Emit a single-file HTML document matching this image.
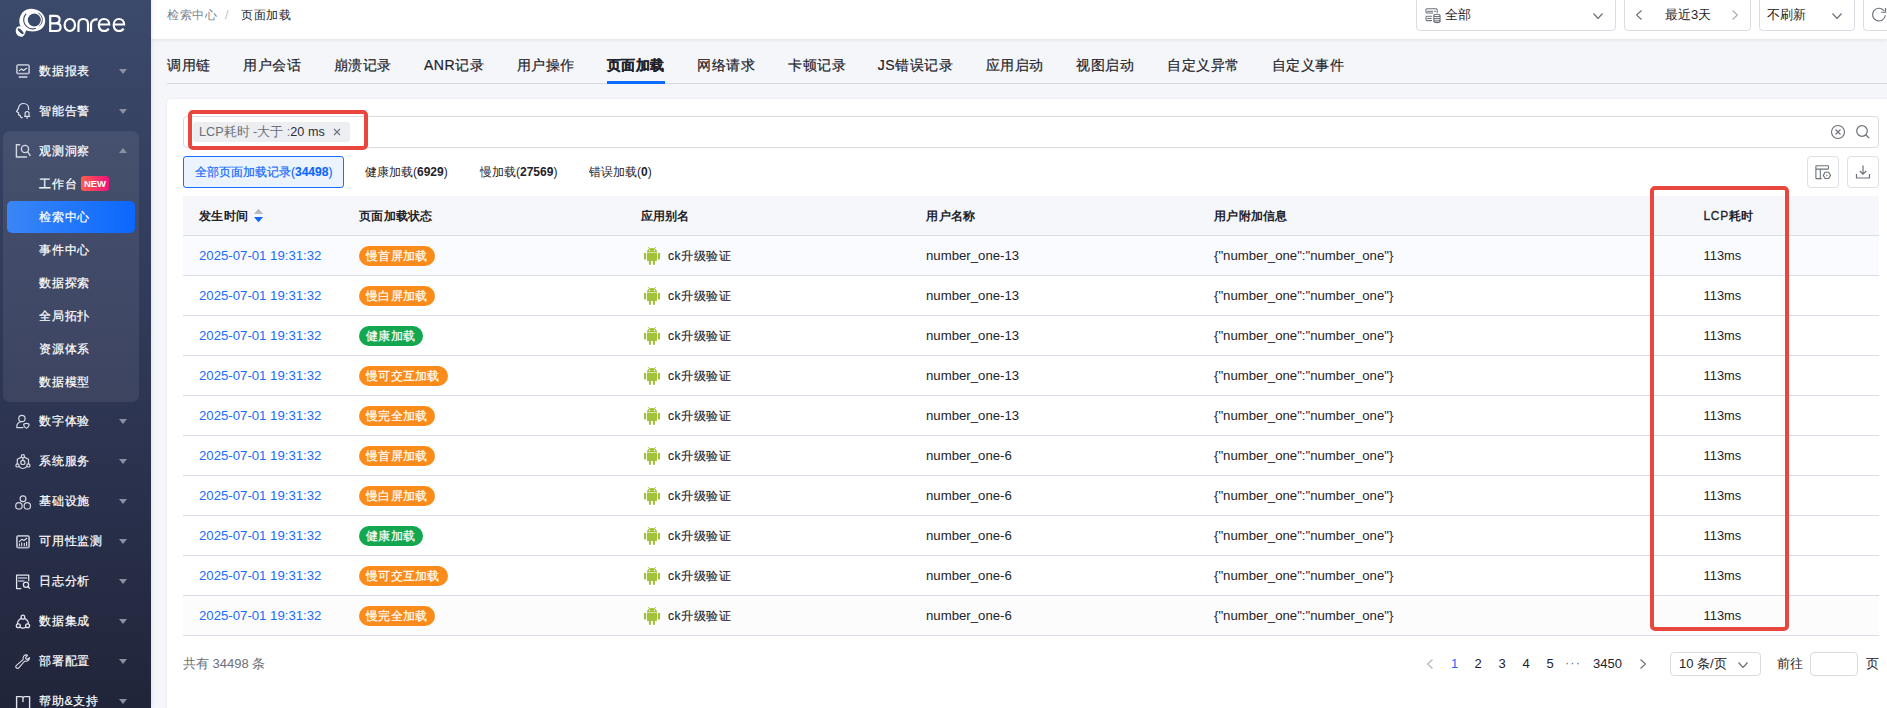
<!DOCTYPE html><html><head><meta charset="utf-8"><style>
*{box-sizing:border-box;margin:0;padding:0}
html,body{width:1887px;height:708px;overflow:hidden}
body{font-family:"Liberation Sans",sans-serif;font-size:13px;color:#1f2329;background:#f4f6fa;position:relative}
.a{position:absolute;white-space:nowrap}
#side{position:absolute;left:0;top:0;width:151px;height:708px;background:linear-gradient(#3b496a,#2f3857 50%,#21253a);box-shadow:1px 0 4px rgba(0,0,0,0.09);z-index:2}
.mt{position:absolute;left:39px;font-size:12px;letter-spacing:0.8px;-webkit-text-stroke:0.2px #fff;line-height:16px;color:#fff;white-space:nowrap}
.ic{position:absolute;left:15px;width:16px;height:16px}
.ar{position:absolute;left:119px;width:0;height:0;border-left:4px solid transparent;border-right:4px solid transparent;border-top:5px solid #8b90a2}
.arup{position:absolute;left:119px;width:0;height:0;border-left:4px solid transparent;border-right:4px solid transparent;border-bottom:5px solid #8b90a2}
#hdr{position:absolute;left:151px;top:0;width:1736px;height:39px;background:#fff;box-shadow:0 1px 4px rgba(0,0,0,0.09)}
.box{position:absolute;border:1px solid #d8dce3;border-radius:4px;background:#fff}
.tab{position:absolute;top:56px;font-size:14px;letter-spacing:0.5px;-webkit-text-stroke-width:0.2px;line-height:18px;color:#1f2329;white-space:nowrap}
.th{position:absolute;top:208px;font-weight:bold;font-size:12px;letter-spacing:0.25px;line-height:16px;color:#1f2329;white-space:nowrap}
.td{position:absolute;font-size:13.2px;line-height:16px;color:#1f2329;white-space:nowrap}
.badge{position:absolute;height:20px;line-height:20px;border-radius:10px;color:#fff;font-size:12px;letter-spacing:0.25px;padding:0 8px 0 7px;-webkit-text-stroke:0.2px #fff;white-space:nowrap}
</style></head><body>
<div id="side">
<svg class="a" style="left:0;top:0" width="130" height="45" viewBox="0 0 130 45">
<path fill="#fff" d="M31 8.7 C38.5 8.7 45.2 13.8 45.2 20.8 C45.2 26 41.5 30.5 35.5 31.3 C31.5 31.8 27 31 24 29.5 C21 28 19.3 25 19.3 21.5 C19.3 14 24.5 8.7 31 8.7 Z"/>
<path fill="#fff" d="M20.5 26.5 L26.5 29.2 L25 33.5 L19.5 32 Z"/>
<circle cx="34.3" cy="20" r="6.5" fill="#3b496a"/>
<path d="M26.2 13.6 A9 9 0 0 0 35.8 28.3" fill="none" stroke="#3b496a" stroke-width="1.1"/>
<path d="M38.3 13 A7.7 7.7 0 0 1 39.2 26" fill="none" stroke="#3b496a" stroke-width="0.9"/>
<ellipse cx="20.4" cy="31.5" rx="4.5" ry="5.4" fill="#fff" transform="rotate(-25 20.4 31.5)"/>
<ellipse cx="20.65" cy="31.2" rx="3.9" ry="1.35" fill="#3b496a" transform="rotate(45 20.65 31.2)"/>
<g fill="none" stroke="#fff" stroke-width="2.2">
<path d="M50.2 15.8 V31 M49.1 15.8 H55.3 C58.1 15.8 59.6 17.6 59.6 19.6 C59.6 21.7 58.1 23.4 55.3 23.4 H50.2 M55.3 23.4 H56.3 C59.2 23.4 60.6 25.3 60.6 27.2 C60.6 29.3 59.2 31 56.3 31 H49.1"/>
<ellipse cx="69.8" cy="25" rx="5.2" ry="6"/>
<path d="M78.45 32.1 V24.2 C78.45 20.6 80.6 19 83.25 19 C85.9 19 88 20.6 88 24.2 V32.1"/>
<path d="M91.05 32.1 V24.5 C91.05 21 93.5 19.1 97.6 19.3"/>
<path d="M98.8 24.5 H109.2 C109.2 21.1 107 19 104 19 C100.9 19 98.8 21.6 98.8 25.1 C98.8 28.7 101 31 104 31 C106.2 31 107.7 30.1 108.7 28.6"/>
<path d="M113.7 24.5 H124.1 C124.1 21.1 121.9 19 118.9 19 C115.8 19 113.7 21.6 113.7 25.1 C113.7 28.7 115.9 31 118.9 31 C121.1 31 122.6 30.1 123.6 28.6"/>
</g>
</svg>
<div class="a" style="left:3px;top:131px;width:136px;height:271px;border-radius:7px;background:rgba(255,255,255,0.075)"></div>
<div class="a" style="left:7px;top:201px;width:128px;height:32px;border-radius:5px;background:linear-gradient(90deg,#3a86f6,#0b68fe)"></div>
<svg class="a" style="left:0;top:0" width="151" height="708" viewBox="0 0 151 708" fill="none" stroke-linecap="round" stroke-linejoin="round">
<g stroke="#b3b8c8" stroke-width="1.8"><rect x="16.9" y="64.9" width="12.2" height="8.8" rx="1.6"/></g>
<rect x="18.7" y="76" width="8.7" height="1.9" rx="0.5" fill="#b3b8c8"/>
<path d="M19.4 70.6 L21.5 68.9 L23.5 70.4 L26.6 68.3" stroke="#e3e6ee" stroke-width="1.2"/>
<g stroke="#dfe2ea" stroke-width="1.2">
<path d="M22.2 117.6 H21 L20.3 115.6 L18.7 114.9 L18.5 112.7 L16.6 111.4 L18.4 108.6 C18.7 105.2 20.9 103.5 23.6 103.5 C26.5 103.5 28.6 105.6 28.6 108.4 V109.6"/>
<path d="M24.5 116.3 H29.7 M25.1 116.2 V113.6 C25.1 112.1 25.9 111.5 27.1 111.5 C28.3 111.5 29.1 112.1 29.1 113.6 V116.2 M27.1 117.3 V118.3"/>
</g>
<g stroke="#d5d8e2" stroke-width="1.4">
<path d="M19.7 144.7 H16.4 V157 H26.6"/>
<circle cx="25" cy="149" r="3.6"/>
<path d="M27.7 151.8 L30.1 155.4"/>
</g>
<g stroke="#d5d8e2" stroke-width="1.2">
<circle cx="21.9" cy="418.5" r="3.2"/>
<path d="M21.2 421.7 C18.6 422.3 16.8 423.9 16.8 426.4 V427.6 H23"/>
<path d="M23.7 424.7 C23.7 423.8 24.6 423.4 26.4 423.4 C28.2 423.4 29.1 423.8 29.1 424.7 C29.1 426.2 27.8 427.5 26.4 428.2 C25 427.5 23.7 426.2 23.7 424.7 Z"/>
</g>
<g stroke="#d5d8e2" stroke-width="1.2">
<circle cx="22.9" cy="456.3" r="1.6"/><circle cx="17.5" cy="465.4" r="1.6"/><circle cx="28.4" cy="465.4" r="1.6"/>
<circle cx="22.9" cy="462.4" r="2.1"/>
<path d="M21.5 457.1 L17.3 459.3 V463.8 M24.3 457.1 L28.5 459.3 V463.8 M18.9 466.4 C20.5 468 21.6 468.5 22.9 468.5 C24.2 468.5 25.4 468 27 466.4 M22.9 457.9 V460.3"/>
</g>
<g stroke="#d5d8e2" stroke-width="1.2">
<circle cx="23" cy="498.7" r="2.9"/><circle cx="18.9" cy="505.9" r="3.2"/><circle cx="27.3" cy="505.9" r="3.2"/>
</g>
<g stroke="#b3b8c8" stroke-width="1.8"><rect x="16.9" y="535.9" width="12.2" height="11.8" rx="1.6"/></g>
<path d="M19.3 541.6 L21.8 539.3 L23.9 540.5 L26.8 538.3" stroke="#e3e6ee" stroke-width="1.1"/>
<path d="M19.4 543.8 V545.6 M21.7 542.8 V545.6 M24.3 543.3 V545.6 M26.6 542 V545.6" stroke="#e3e6ee" stroke-width="1.1"/>
<g stroke="#e3e6ee" stroke-width="1.3">
<path d="M20.8 588.6 H16.6 V575.1 H28.7 V580.7"/>
<circle cx="26" cy="584.8" r="2.6"/>
<path d="M27.9 586.7 L29.6 588.4"/>
</g>
<path d="M18.6 578 H26.6 M18.6 581 H23.8" stroke="#b3b8c8" stroke-width="1.6"/>
<g stroke="#dfe2ea" stroke-width="1.3">
<ellipse cx="22.9" cy="617.2" rx="1.8" ry="2"/><ellipse cx="18.3" cy="625.8" rx="2" ry="1.9"/><ellipse cx="27.6" cy="625.8" rx="2" ry="1.9"/>
<path d="M21.3 618.3 C18.9 619.7 17.3 621.8 17.5 623.9 M24.5 618.3 C26.9 619.7 28.5 621.8 28.3 623.9 M20 627.1 C21 627.9 21.9 628.2 22.9 628.2 C23.9 628.2 24.9 627.9 25.9 627.1"/>
</g>
<path d="M26.8 654.9 C24.6 654.7 22.8 656.6 23.1 658.8 C23.2 659.3 23.1 659.6 22.8 659.9 L16.4 665.4 C15.6 666.1 15.6 667.2 16.3 667.9 C17 668.6 18.1 668.6 18.8 667.8 L24.3 661.5 C24.6 661.2 24.9 661.1 25.4 661.2 C27.6 661.6 29.6 659.9 29.5 657.6 L27.6 659.2 C27.3 659.4 26.9 659.4 26.6 659.2 L25.8 658.5 C25.5 658.2 25.5 657.7 25.8 657.4 L27.3 655.7 C27.5 655.4 27.3 655 26.8 654.9 Z" stroke="#dfe2ea" stroke-width="1.1"/>
<path d="M16.6 709 V696.6 H21.3 C22.4 696.6 23 697.3 23 698.3 V701.5 M29.6 709 V696.6 H24.8 C23.7 696.6 23 697.3 23 698.3" stroke="#dfe2ea" stroke-width="1.4"/>
</svg>
<div class="mt" style="top:63px">数据报表</div>
<div class="ar" style="top:69px"></div>
<div class="mt" style="top:103px">智能告警</div>
<div class="ar" style="top:109px"></div>
<div class="mt" style="top:143px">观测洞察</div>
<div class="arup" style="top:148px"></div>
<div class="mt" style="top:413px">数字体验</div>
<div class="ar" style="top:419px"></div>
<div class="mt" style="top:453px">系统服务</div>
<div class="ar" style="top:459px"></div>
<div class="mt" style="top:493px">基础设施</div>
<div class="ar" style="top:499px"></div>
<div class="mt" style="top:533px">可用性监测</div>
<div class="ar" style="top:539px"></div>
<div class="mt" style="top:573px">日志分析</div>
<div class="ar" style="top:579px"></div>
<div class="mt" style="top:613px">数据集成</div>
<div class="ar" style="top:619px"></div>
<div class="mt" style="top:653px">部署配置</div>
<div class="ar" style="top:659px"></div>
<div class="mt" style="top:693px">帮助&支持</div>
<div class="ar" style="top:699px"></div>
<div class="mt" style="top:176px">工作台</div>
<div class="mt" style="top:209px">检索中心</div>
<div class="mt" style="top:242px">事件中心</div>
<div class="mt" style="top:275px">数据探索</div>
<div class="mt" style="top:308px">全局拓扑</div>
<div class="mt" style="top:341px">资源体系</div>
<div class="mt" style="top:374px">数据模型</div>
<div class="a" style="left:81px;top:176px;width:28px;height:15px;border-radius:3px;background:linear-gradient(90deg,#ff5e4a,#f0137d);font-size:9.5px;font-weight:bold;color:#fff;line-height:15px;text-align:center">NEW</div>
</div>
<div id="hdr"></div>
<div class="a" style="left:167px;top:7px;font-size:12px;letter-spacing:0.6px;line-height:16px;color:#80858f">检索中心</div>
<div class="a" style="left:225px;top:7px;font-size:13px;line-height:16px;color:#c0c4cc">/</div>
<div class="a" style="left:241px;top:7px;font-size:12px;letter-spacing:0.6px;line-height:16px;color:#1f2329">页面加载</div>
<div class="box" style="left:1416px;top:-3px;width:200px;height:34px"></div>
<svg class="a" style="left:1420px;top:3px" width="26" height="24" viewBox="0 0 26 24" fill="none" stroke="#6b7079" stroke-width="1.05" stroke-linecap="round">
<path d="M12.8 9.9 H7 C6.4 9.9 6 9.5 6 8.9 V6.7 C6 6.1 6.4 5.7 7 5.7 H16.2 C16.8 5.7 17.2 6.1 17.2 6.7 V9.5"/>
<path d="M7.6 8.2 H12.6 M14.4 8.2 H15.5"/>
<path d="M11.6 13.2 H7 C6.4 13.2 6 13.6 6 14.2 V16.6 C6 17.2 6.4 17.6 7 17.6 H11.6 M7.6 15.4 H11.2"/>
<path d="M13.8 12.4 C13.8 11.6 15.2 11.2 16.95 11.2 C18.7 11.2 20.1 11.6 20.1 12.4 V18.4 C20.1 19.2 18.7 19.6 16.95 19.6 C15.2 19.6 13.8 19.2 13.8 18.4 Z M13.8 12.4 C13.8 13.2 15.2 13.6 16.95 13.6 C18.7 13.6 20.1 13.2 20.1 12.4 M13.8 14.8 C13.8 15.5 15.2 15.8 16.95 15.8 C18.7 15.8 20.1 15.5 20.1 14.8 M13.8 17 C13.8 17.7 15.2 18 16.95 18 C18.7 18 20.1 17.7 20.1 17"/>
</svg>
<div class="a" style="left:1445px;top:7px;font-size:13px;line-height:16px;color:#1f2329">全部</div>
<svg class="a" style="left:1593px;top:13px" width="10" height="6" viewBox="0 0 10 6"><path d="M0.5 0.5 L5.0 5.5 L9.5 0.5" fill="none" stroke="#6b7079" stroke-width="1.2"/></svg>
<div class="box" style="left:1624px;top:-3px;width:127px;height:34px"></div>
<svg class="a" style="left:1636px;top:10px" width="6" height="10" viewBox="0 0 6 10"><path d="M5.5 0.5 L0.5 5.0 L5.5 9.5" fill="none" stroke="#6b7079" stroke-width="1.2"/></svg>
<div class="a" style="left:1665px;top:7px;font-size:13px;line-height:16px;color:#1f2329">最近3天</div>
<svg class="a" style="left:1732px;top:10px" width="6" height="10" viewBox="0 0 6 10"><path d="M0.5 0.5 L5.5 5.0 L0.5 9.5" fill="none" stroke="#a9adb5" stroke-width="1.2"/></svg>
<div class="box" style="left:1759px;top:-3px;width:96px;height:34px"></div>
<div class="a" style="left:1767px;top:7px;font-size:13px;line-height:16px;color:#1f2329">不刷新</div>
<svg class="a" style="left:1832px;top:13px" width="10" height="6" viewBox="0 0 10 6"><path d="M0.5 0.5 L5.0 5.5 L9.5 0.5" fill="none" stroke="#6b7079" stroke-width="1.2"/></svg>
<div class="box" style="left:1863px;top:-3px;width:40px;height:34px"></div>
<svg class="a" style="left:1870px;top:6px" width="17" height="18" viewBox="0 0 17 18"><path d="M15.3 9.2 A6.4 6.4 0 1 1 14.2 5" fill="none" stroke="#6b7079" stroke-width="1.1"/><path d="M15.6 2.1 V6.2 H11.2" fill="none" stroke="#6b7079" stroke-width="1.1"/></svg>
<div class="a" style="left:167px;top:83px;width:1720px;height:1px;background:#d5dae2"></div>
<div class="tab" style="left:167px;">调用链</div>
<div class="tab" style="left:243px;">用户会话</div>
<div class="tab" style="left:333.6px;">崩溃记录</div>
<div class="tab" style="left:424px;">ANR记录</div>
<div class="tab" style="left:516.7px;">用户操作</div>
<div class="tab" style="left:606.8px;font-weight:bold;">页面加载</div>
<div class="tab" style="left:697.4px;">网络请求</div>
<div class="tab" style="left:788px;">卡顿记录</div>
<div class="tab" style="left:877.7px;">JS错误记录</div>
<div class="tab" style="left:985.9px;">应用启动</div>
<div class="tab" style="left:1076.4px;">视图启动</div>
<div class="tab" style="left:1167.3px;">自定义异常</div>
<div class="tab" style="left:1271.5px;">自定义事件</div>
<div class="a" style="left:607px;top:81px;width:58px;height:3px;background:#0b6bff"></div>
<div class="a" style="left:167px;top:99px;width:1740px;height:640px;background:#fff;border-radius:4px;box-shadow:0 0 3px rgba(0,0,0,0.08)"></div>
<div class="box" style="left:183px;top:116px;width:1696px;height:32px;border-color:#d9dce3"></div>
<div class="a" style="left:193px;top:122px;width:157px;height:20px;border-radius:3px;background:#eceef2"></div>
<div class="a" style="left:199px;top:124px;font-size:12.65px;line-height:16px;color:#6b7079">LCP耗时 -大于 :<span style="color:#2b2f36">20 ms</span></div>
<svg class="a" style="left:333px;top:128px" width="8" height="8" viewBox="0 0 8 8"><path d="M1 1 L7 7 M7 1 L1 7" stroke="#6b7079" stroke-width="1.1"/></svg>
<svg class="a" style="left:1830px;top:124px" width="16" height="16" viewBox="0 0 16 16"><circle cx="8" cy="8" r="6.5" fill="none" stroke="#6b7079" stroke-width="1.1"/><path d="M5.5 5.5 L10.5 10.5 M10.5 5.5 L5.5 10.5" stroke="#6b7079" stroke-width="1.1"/></svg>
<svg class="a" style="left:1855px;top:124px" width="16" height="16" viewBox="0 0 16 16"><circle cx="7" cy="7" r="5.3" fill="none" stroke="#6b7079" stroke-width="1.2"/><path d="M11 11 L14 14" stroke="#6b7079" stroke-width="1.3"/></svg>
<div class="a" style="left:188px;top:110px;width:180px;height:40px;border:4px solid #e9473d;border-radius:5px"></div>
<div class="a" style="left:183px;top:156px;width:161px;height:32px;border:1px solid #1a6efc;border-radius:3px;background:#ebf3fe"></div>
<div class="a" style="left:195px;top:164px;font-size:12px;line-height:16px;color:#0f66fb;-webkit-text-stroke-width:0.15px">全部页面加载记录(<b>34498</b>)</div>
<div class="a" style="left:365px;top:164px;font-size:12px;line-height:16px;color:#1f2329">健康加载(<b>6929</b>)</div>
<div class="a" style="left:480px;top:164px;font-size:12px;line-height:16px;color:#1f2329">慢加载(<b>27569</b>)</div>
<div class="a" style="left:589px;top:164px;font-size:12px;line-height:16px;color:#1f2329">错误加载(<b>0</b>)</div>
<div class="box" style="left:1807px;top:156px;width:32px;height:32px;border-color:#dcdfe5"></div>
<svg class="a" style="left:1805px;top:154px" width="36" height="36" viewBox="0 0 36 36" fill="none" stroke="#6b7079" stroke-width="1.1" stroke-linejoin="round"><rect x="10.9" y="11.7" width="12.6" height="3.4" rx="0.6"/><path d="M10.9 15.1 V23.9 C10.9 24.3 11.2 24.6 11.6 24.6 H16.6 M15.3 15.2 V24.4"/><path d="M18.3 21.4 L20.1 18.3 H23.7 L25.5 21.4 L23.7 24.5 H20.1 Z"/><path d="M21.3 20.4 L22.9 21.4 L21.3 22.4 Z" fill="#6b7079" stroke="none"/></svg>
<div class="box" style="left:1847px;top:156px;width:32px;height:32px;border-color:#dcdfe5"></div>
<svg class="a" style="left:1855px;top:164px" width="16" height="16" viewBox="0 0 16 16"><path d="M8 1.5 V10 M4.8 7 L8 10.2 L11.2 7" fill="none" stroke="#6b7079" stroke-width="1.2"/><path d="M1.5 10 V14 H14.5 V10" fill="none" stroke="#6b7079" stroke-width="1.2"/></svg>
<div class="a" style="left:183px;top:196px;width:1696px;height:40px;background:#f5f7fa;border-bottom:1px solid #d9dee6"></div>
<div class="th" style="left:199px">发生时间</div>
<div class="th" style="left:359px">页面加载状态</div>
<div class="th" style="left:640.6px">应用别名</div>
<div class="th" style="left:926.4px">用户名称</div>
<div class="th" style="left:1214.2px">用户附加信息</div>
<div class="th" style="left:1703.6px"><span style="font-weight:normal;-webkit-text-stroke-width:0.3px;letter-spacing:0.6px">LCP</span>耗时</div>
<svg class="a" style="left:254px;top:208px" width="9" height="15" viewBox="0 0 9 15"><path d="M0 6 L4.5 0.8 L9 6 Z" fill="#b4bac4"/><path d="M0 9 L4.5 14.2 L9 9 Z" fill="#0f66fb"/></svg>
<div class="a" style="left:183px;top:236px;width:1696px;height:40px;background:#fafbfe;border-bottom:1px solid #d9dee6"></div>
<div class="td" style="left:199px;top:248px;color:#1a6cfb">2025-07-01 19:31:32</div>
<div class="badge" style="left:359px;top:246px;background:#fb8b1a">慢首屏加载</div>
<svg class="a" style="left:643px;top:246px" width="18" height="20" viewBox="0 0 18 20"><path d="M5.2 1.1 L6.6 2.6 M12.8 1.1 L11.4 2.6" stroke="#a3c13a" stroke-width="0.9"/><path d="M3.9 6.2 C3.9 3.5 6 1.9 9 1.9 C12 1.9 14.1 3.5 14.1 6.2 Z" fill="#a3c13a"/><path d="M3.9 6.8 H14.1 V14 C14.1 14.5 13.7 14.9 13.2 14.9 H4.8 C4.3 14.9 3.9 14.5 3.9 14 Z" fill="#a3c13a"/><rect x="0.9" y="6.7" width="2.2" height="7" rx="1.1" fill="#a3c13a"/><rect x="14.9" y="6.7" width="2.2" height="7" rx="1.1" fill="#a3c13a"/><rect x="5.9" y="13" width="2.1" height="6" rx="1" fill="#a3c13a"/><rect x="9.9" y="13" width="2.1" height="6" rx="1" fill="#a3c13a"/><circle cx="6.6" cy="4.4" r="0.65" fill="#fff"/><circle cx="11.4" cy="4.4" r="0.65" fill="#fff"/></svg>
<div class="td" style="left:668px;top:248px;font-size:12px;letter-spacing:0.5px;-webkit-text-stroke-width:0.15px">ck升级验证</div>
<div class="td" style="left:926px;top:248px">number_one-13</div>
<div class="td" style="left:1214px;top:248px">{"number_one":"number_one"}</div>
<div class="td" style="left:1703.5px;top:248px;font-size:12.9px">113ms</div>
<div class="a" style="left:183px;top:276px;width:1696px;height:40px;background:#fff;border-bottom:1px solid #d9dee6"></div>
<div class="td" style="left:199px;top:288px;color:#1a6cfb">2025-07-01 19:31:32</div>
<div class="badge" style="left:359px;top:286px;background:#fb8b1a">慢白屏加载</div>
<svg class="a" style="left:643px;top:286px" width="18" height="20" viewBox="0 0 18 20"><path d="M5.2 1.1 L6.6 2.6 M12.8 1.1 L11.4 2.6" stroke="#a3c13a" stroke-width="0.9"/><path d="M3.9 6.2 C3.9 3.5 6 1.9 9 1.9 C12 1.9 14.1 3.5 14.1 6.2 Z" fill="#a3c13a"/><path d="M3.9 6.8 H14.1 V14 C14.1 14.5 13.7 14.9 13.2 14.9 H4.8 C4.3 14.9 3.9 14.5 3.9 14 Z" fill="#a3c13a"/><rect x="0.9" y="6.7" width="2.2" height="7" rx="1.1" fill="#a3c13a"/><rect x="14.9" y="6.7" width="2.2" height="7" rx="1.1" fill="#a3c13a"/><rect x="5.9" y="13" width="2.1" height="6" rx="1" fill="#a3c13a"/><rect x="9.9" y="13" width="2.1" height="6" rx="1" fill="#a3c13a"/><circle cx="6.6" cy="4.4" r="0.65" fill="#fff"/><circle cx="11.4" cy="4.4" r="0.65" fill="#fff"/></svg>
<div class="td" style="left:668px;top:288px;font-size:12px;letter-spacing:0.5px;-webkit-text-stroke-width:0.15px">ck升级验证</div>
<div class="td" style="left:926px;top:288px">number_one-13</div>
<div class="td" style="left:1214px;top:288px">{"number_one":"number_one"}</div>
<div class="td" style="left:1703.5px;top:288px;font-size:12.9px">113ms</div>
<div class="a" style="left:183px;top:316px;width:1696px;height:40px;background:#fff;border-bottom:1px solid #d9dee6"></div>
<div class="td" style="left:199px;top:328px;color:#1a6cfb">2025-07-01 19:31:32</div>
<div class="badge" style="left:359px;top:326px;background:#14a751">健康加载</div>
<svg class="a" style="left:643px;top:326px" width="18" height="20" viewBox="0 0 18 20"><path d="M5.2 1.1 L6.6 2.6 M12.8 1.1 L11.4 2.6" stroke="#a3c13a" stroke-width="0.9"/><path d="M3.9 6.2 C3.9 3.5 6 1.9 9 1.9 C12 1.9 14.1 3.5 14.1 6.2 Z" fill="#a3c13a"/><path d="M3.9 6.8 H14.1 V14 C14.1 14.5 13.7 14.9 13.2 14.9 H4.8 C4.3 14.9 3.9 14.5 3.9 14 Z" fill="#a3c13a"/><rect x="0.9" y="6.7" width="2.2" height="7" rx="1.1" fill="#a3c13a"/><rect x="14.9" y="6.7" width="2.2" height="7" rx="1.1" fill="#a3c13a"/><rect x="5.9" y="13" width="2.1" height="6" rx="1" fill="#a3c13a"/><rect x="9.9" y="13" width="2.1" height="6" rx="1" fill="#a3c13a"/><circle cx="6.6" cy="4.4" r="0.65" fill="#fff"/><circle cx="11.4" cy="4.4" r="0.65" fill="#fff"/></svg>
<div class="td" style="left:668px;top:328px;font-size:12px;letter-spacing:0.5px;-webkit-text-stroke-width:0.15px">ck升级验证</div>
<div class="td" style="left:926px;top:328px">number_one-13</div>
<div class="td" style="left:1214px;top:328px">{"number_one":"number_one"}</div>
<div class="td" style="left:1703.5px;top:328px;font-size:12.9px">113ms</div>
<div class="a" style="left:183px;top:356px;width:1696px;height:40px;background:#fff;border-bottom:1px solid #d9dee6"></div>
<div class="td" style="left:199px;top:368px;color:#1a6cfb">2025-07-01 19:31:32</div>
<div class="badge" style="left:359px;top:366px;background:#fb8b1a">慢可交互加载</div>
<svg class="a" style="left:643px;top:366px" width="18" height="20" viewBox="0 0 18 20"><path d="M5.2 1.1 L6.6 2.6 M12.8 1.1 L11.4 2.6" stroke="#a3c13a" stroke-width="0.9"/><path d="M3.9 6.2 C3.9 3.5 6 1.9 9 1.9 C12 1.9 14.1 3.5 14.1 6.2 Z" fill="#a3c13a"/><path d="M3.9 6.8 H14.1 V14 C14.1 14.5 13.7 14.9 13.2 14.9 H4.8 C4.3 14.9 3.9 14.5 3.9 14 Z" fill="#a3c13a"/><rect x="0.9" y="6.7" width="2.2" height="7" rx="1.1" fill="#a3c13a"/><rect x="14.9" y="6.7" width="2.2" height="7" rx="1.1" fill="#a3c13a"/><rect x="5.9" y="13" width="2.1" height="6" rx="1" fill="#a3c13a"/><rect x="9.9" y="13" width="2.1" height="6" rx="1" fill="#a3c13a"/><circle cx="6.6" cy="4.4" r="0.65" fill="#fff"/><circle cx="11.4" cy="4.4" r="0.65" fill="#fff"/></svg>
<div class="td" style="left:668px;top:368px;font-size:12px;letter-spacing:0.5px;-webkit-text-stroke-width:0.15px">ck升级验证</div>
<div class="td" style="left:926px;top:368px">number_one-13</div>
<div class="td" style="left:1214px;top:368px">{"number_one":"number_one"}</div>
<div class="td" style="left:1703.5px;top:368px;font-size:12.9px">113ms</div>
<div class="a" style="left:183px;top:396px;width:1696px;height:40px;background:#fff;border-bottom:1px solid #d9dee6"></div>
<div class="td" style="left:199px;top:408px;color:#1a6cfb">2025-07-01 19:31:32</div>
<div class="badge" style="left:359px;top:406px;background:#fb8b1a">慢完全加载</div>
<svg class="a" style="left:643px;top:406px" width="18" height="20" viewBox="0 0 18 20"><path d="M5.2 1.1 L6.6 2.6 M12.8 1.1 L11.4 2.6" stroke="#a3c13a" stroke-width="0.9"/><path d="M3.9 6.2 C3.9 3.5 6 1.9 9 1.9 C12 1.9 14.1 3.5 14.1 6.2 Z" fill="#a3c13a"/><path d="M3.9 6.8 H14.1 V14 C14.1 14.5 13.7 14.9 13.2 14.9 H4.8 C4.3 14.9 3.9 14.5 3.9 14 Z" fill="#a3c13a"/><rect x="0.9" y="6.7" width="2.2" height="7" rx="1.1" fill="#a3c13a"/><rect x="14.9" y="6.7" width="2.2" height="7" rx="1.1" fill="#a3c13a"/><rect x="5.9" y="13" width="2.1" height="6" rx="1" fill="#a3c13a"/><rect x="9.9" y="13" width="2.1" height="6" rx="1" fill="#a3c13a"/><circle cx="6.6" cy="4.4" r="0.65" fill="#fff"/><circle cx="11.4" cy="4.4" r="0.65" fill="#fff"/></svg>
<div class="td" style="left:668px;top:408px;font-size:12px;letter-spacing:0.5px;-webkit-text-stroke-width:0.15px">ck升级验证</div>
<div class="td" style="left:926px;top:408px">number_one-13</div>
<div class="td" style="left:1214px;top:408px">{"number_one":"number_one"}</div>
<div class="td" style="left:1703.5px;top:408px;font-size:12.9px">113ms</div>
<div class="a" style="left:183px;top:436px;width:1696px;height:40px;background:#fff;border-bottom:1px solid #d9dee6"></div>
<div class="td" style="left:199px;top:448px;color:#1a6cfb">2025-07-01 19:31:32</div>
<div class="badge" style="left:359px;top:446px;background:#fb8b1a">慢首屏加载</div>
<svg class="a" style="left:643px;top:446px" width="18" height="20" viewBox="0 0 18 20"><path d="M5.2 1.1 L6.6 2.6 M12.8 1.1 L11.4 2.6" stroke="#a3c13a" stroke-width="0.9"/><path d="M3.9 6.2 C3.9 3.5 6 1.9 9 1.9 C12 1.9 14.1 3.5 14.1 6.2 Z" fill="#a3c13a"/><path d="M3.9 6.8 H14.1 V14 C14.1 14.5 13.7 14.9 13.2 14.9 H4.8 C4.3 14.9 3.9 14.5 3.9 14 Z" fill="#a3c13a"/><rect x="0.9" y="6.7" width="2.2" height="7" rx="1.1" fill="#a3c13a"/><rect x="14.9" y="6.7" width="2.2" height="7" rx="1.1" fill="#a3c13a"/><rect x="5.9" y="13" width="2.1" height="6" rx="1" fill="#a3c13a"/><rect x="9.9" y="13" width="2.1" height="6" rx="1" fill="#a3c13a"/><circle cx="6.6" cy="4.4" r="0.65" fill="#fff"/><circle cx="11.4" cy="4.4" r="0.65" fill="#fff"/></svg>
<div class="td" style="left:668px;top:448px;font-size:12px;letter-spacing:0.5px;-webkit-text-stroke-width:0.15px">ck升级验证</div>
<div class="td" style="left:926px;top:448px">number_one-6</div>
<div class="td" style="left:1214px;top:448px">{"number_one":"number_one"}</div>
<div class="td" style="left:1703.5px;top:448px;font-size:12.9px">113ms</div>
<div class="a" style="left:183px;top:476px;width:1696px;height:40px;background:#fff;border-bottom:1px solid #d9dee6"></div>
<div class="td" style="left:199px;top:488px;color:#1a6cfb">2025-07-01 19:31:32</div>
<div class="badge" style="left:359px;top:486px;background:#fb8b1a">慢白屏加载</div>
<svg class="a" style="left:643px;top:486px" width="18" height="20" viewBox="0 0 18 20"><path d="M5.2 1.1 L6.6 2.6 M12.8 1.1 L11.4 2.6" stroke="#a3c13a" stroke-width="0.9"/><path d="M3.9 6.2 C3.9 3.5 6 1.9 9 1.9 C12 1.9 14.1 3.5 14.1 6.2 Z" fill="#a3c13a"/><path d="M3.9 6.8 H14.1 V14 C14.1 14.5 13.7 14.9 13.2 14.9 H4.8 C4.3 14.9 3.9 14.5 3.9 14 Z" fill="#a3c13a"/><rect x="0.9" y="6.7" width="2.2" height="7" rx="1.1" fill="#a3c13a"/><rect x="14.9" y="6.7" width="2.2" height="7" rx="1.1" fill="#a3c13a"/><rect x="5.9" y="13" width="2.1" height="6" rx="1" fill="#a3c13a"/><rect x="9.9" y="13" width="2.1" height="6" rx="1" fill="#a3c13a"/><circle cx="6.6" cy="4.4" r="0.65" fill="#fff"/><circle cx="11.4" cy="4.4" r="0.65" fill="#fff"/></svg>
<div class="td" style="left:668px;top:488px;font-size:12px;letter-spacing:0.5px;-webkit-text-stroke-width:0.15px">ck升级验证</div>
<div class="td" style="left:926px;top:488px">number_one-6</div>
<div class="td" style="left:1214px;top:488px">{"number_one":"number_one"}</div>
<div class="td" style="left:1703.5px;top:488px;font-size:12.9px">113ms</div>
<div class="a" style="left:183px;top:516px;width:1696px;height:40px;background:#fff;border-bottom:1px solid #d9dee6"></div>
<div class="td" style="left:199px;top:528px;color:#1a6cfb">2025-07-01 19:31:32</div>
<div class="badge" style="left:359px;top:526px;background:#14a751">健康加载</div>
<svg class="a" style="left:643px;top:526px" width="18" height="20" viewBox="0 0 18 20"><path d="M5.2 1.1 L6.6 2.6 M12.8 1.1 L11.4 2.6" stroke="#a3c13a" stroke-width="0.9"/><path d="M3.9 6.2 C3.9 3.5 6 1.9 9 1.9 C12 1.9 14.1 3.5 14.1 6.2 Z" fill="#a3c13a"/><path d="M3.9 6.8 H14.1 V14 C14.1 14.5 13.7 14.9 13.2 14.9 H4.8 C4.3 14.9 3.9 14.5 3.9 14 Z" fill="#a3c13a"/><rect x="0.9" y="6.7" width="2.2" height="7" rx="1.1" fill="#a3c13a"/><rect x="14.9" y="6.7" width="2.2" height="7" rx="1.1" fill="#a3c13a"/><rect x="5.9" y="13" width="2.1" height="6" rx="1" fill="#a3c13a"/><rect x="9.9" y="13" width="2.1" height="6" rx="1" fill="#a3c13a"/><circle cx="6.6" cy="4.4" r="0.65" fill="#fff"/><circle cx="11.4" cy="4.4" r="0.65" fill="#fff"/></svg>
<div class="td" style="left:668px;top:528px;font-size:12px;letter-spacing:0.5px;-webkit-text-stroke-width:0.15px">ck升级验证</div>
<div class="td" style="left:926px;top:528px">number_one-6</div>
<div class="td" style="left:1214px;top:528px">{"number_one":"number_one"}</div>
<div class="td" style="left:1703.5px;top:528px;font-size:12.9px">113ms</div>
<div class="a" style="left:183px;top:556px;width:1696px;height:40px;background:#fff;border-bottom:1px solid #d9dee6"></div>
<div class="td" style="left:199px;top:568px;color:#1a6cfb">2025-07-01 19:31:32</div>
<div class="badge" style="left:359px;top:566px;background:#fb8b1a">慢可交互加载</div>
<svg class="a" style="left:643px;top:566px" width="18" height="20" viewBox="0 0 18 20"><path d="M5.2 1.1 L6.6 2.6 M12.8 1.1 L11.4 2.6" stroke="#a3c13a" stroke-width="0.9"/><path d="M3.9 6.2 C3.9 3.5 6 1.9 9 1.9 C12 1.9 14.1 3.5 14.1 6.2 Z" fill="#a3c13a"/><path d="M3.9 6.8 H14.1 V14 C14.1 14.5 13.7 14.9 13.2 14.9 H4.8 C4.3 14.9 3.9 14.5 3.9 14 Z" fill="#a3c13a"/><rect x="0.9" y="6.7" width="2.2" height="7" rx="1.1" fill="#a3c13a"/><rect x="14.9" y="6.7" width="2.2" height="7" rx="1.1" fill="#a3c13a"/><rect x="5.9" y="13" width="2.1" height="6" rx="1" fill="#a3c13a"/><rect x="9.9" y="13" width="2.1" height="6" rx="1" fill="#a3c13a"/><circle cx="6.6" cy="4.4" r="0.65" fill="#fff"/><circle cx="11.4" cy="4.4" r="0.65" fill="#fff"/></svg>
<div class="td" style="left:668px;top:568px;font-size:12px;letter-spacing:0.5px;-webkit-text-stroke-width:0.15px">ck升级验证</div>
<div class="td" style="left:926px;top:568px">number_one-6</div>
<div class="td" style="left:1214px;top:568px">{"number_one":"number_one"}</div>
<div class="td" style="left:1703.5px;top:568px;font-size:12.9px">113ms</div>
<div class="a" style="left:183px;top:596px;width:1696px;height:40px;background:#fcfcfd;border-bottom:1px solid #d9dee6"></div>
<div class="td" style="left:199px;top:608px;color:#1a6cfb">2025-07-01 19:31:32</div>
<div class="badge" style="left:359px;top:606px;background:#fb8b1a">慢完全加载</div>
<svg class="a" style="left:643px;top:606px" width="18" height="20" viewBox="0 0 18 20"><path d="M5.2 1.1 L6.6 2.6 M12.8 1.1 L11.4 2.6" stroke="#a3c13a" stroke-width="0.9"/><path d="M3.9 6.2 C3.9 3.5 6 1.9 9 1.9 C12 1.9 14.1 3.5 14.1 6.2 Z" fill="#a3c13a"/><path d="M3.9 6.8 H14.1 V14 C14.1 14.5 13.7 14.9 13.2 14.9 H4.8 C4.3 14.9 3.9 14.5 3.9 14 Z" fill="#a3c13a"/><rect x="0.9" y="6.7" width="2.2" height="7" rx="1.1" fill="#a3c13a"/><rect x="14.9" y="6.7" width="2.2" height="7" rx="1.1" fill="#a3c13a"/><rect x="5.9" y="13" width="2.1" height="6" rx="1" fill="#a3c13a"/><rect x="9.9" y="13" width="2.1" height="6" rx="1" fill="#a3c13a"/><circle cx="6.6" cy="4.4" r="0.65" fill="#fff"/><circle cx="11.4" cy="4.4" r="0.65" fill="#fff"/></svg>
<div class="td" style="left:668px;top:608px;font-size:12px;letter-spacing:0.5px;-webkit-text-stroke-width:0.15px">ck升级验证</div>
<div class="td" style="left:926px;top:608px">number_one-6</div>
<div class="td" style="left:1214px;top:608px">{"number_one":"number_one"}</div>
<div class="td" style="left:1703.5px;top:608px;font-size:12.9px">113ms</div>
<div class="a" style="left:1650px;top:186px;width:139px;height:445px;border:4px solid #e9473d;border-radius:5px"></div>
<div class="a" style="left:183px;top:656px;font-size:13px;line-height:16px;color:#6b7079">共有 34498 条</div>
<svg class="a" style="left:1427px;top:659px" width="6" height="10" viewBox="0 0 6 10"><path d="M5.5 0.5 L0.5 5.0 L5.5 9.5" fill="none" stroke="#b0b4bb" stroke-width="1.2"/></svg>
<div class="a" style="left:1451px;top:656px;font-size:13px;line-height:16px;color:#1a6cfb">1</div>
<div class="a" style="left:1474.5px;top:656px;font-size:13px;line-height:16px;color:#1f2329">2</div>
<div class="a" style="left:1498.5px;top:656px;font-size:13px;line-height:16px;color:#1f2329">3</div>
<div class="a" style="left:1522.5px;top:656px;font-size:13px;line-height:16px;color:#1f2329">4</div>
<div class="a" style="left:1546.5px;top:656px;font-size:13px;line-height:16px;color:#1f2329">5</div>
<div class="a" style="left:1593px;top:656px;font-size:13px;line-height:16px;color:#1f2329">3450</div>
<div class="a" style="left:1565px;top:655px;font-size:13px;line-height:16px;color:#6b7079;letter-spacing:1px">···</div>
<svg class="a" style="left:1640px;top:659px" width="6" height="10" viewBox="0 0 6 10"><path d="M0.5 0.5 L5.5 5.0 L0.5 9.5" fill="none" stroke="#6b7079" stroke-width="1.2"/></svg>
<div class="box" style="left:1670px;top:652px;width:91px;height:24px"></div>
<div class="a" style="left:1679px;top:656px;font-size:13px;line-height:16px;color:#1f2329">10 条/页</div>
<svg class="a" style="left:1738px;top:662px" width="10" height="6" viewBox="0 0 10 6"><path d="M0.5 0.5 L5.0 5.5 L9.5 0.5" fill="none" stroke="#6b7079" stroke-width="1.2"/></svg>
<div class="a" style="left:1777px;top:656px;font-size:13px;line-height:16px;color:#1f2329">前往</div>
<div class="box" style="left:1810px;top:652px;width:48px;height:24px"></div>
<div class="a" style="left:1866px;top:656px;font-size:13px;line-height:16px;color:#1f2329">页</div>
</body></html>
